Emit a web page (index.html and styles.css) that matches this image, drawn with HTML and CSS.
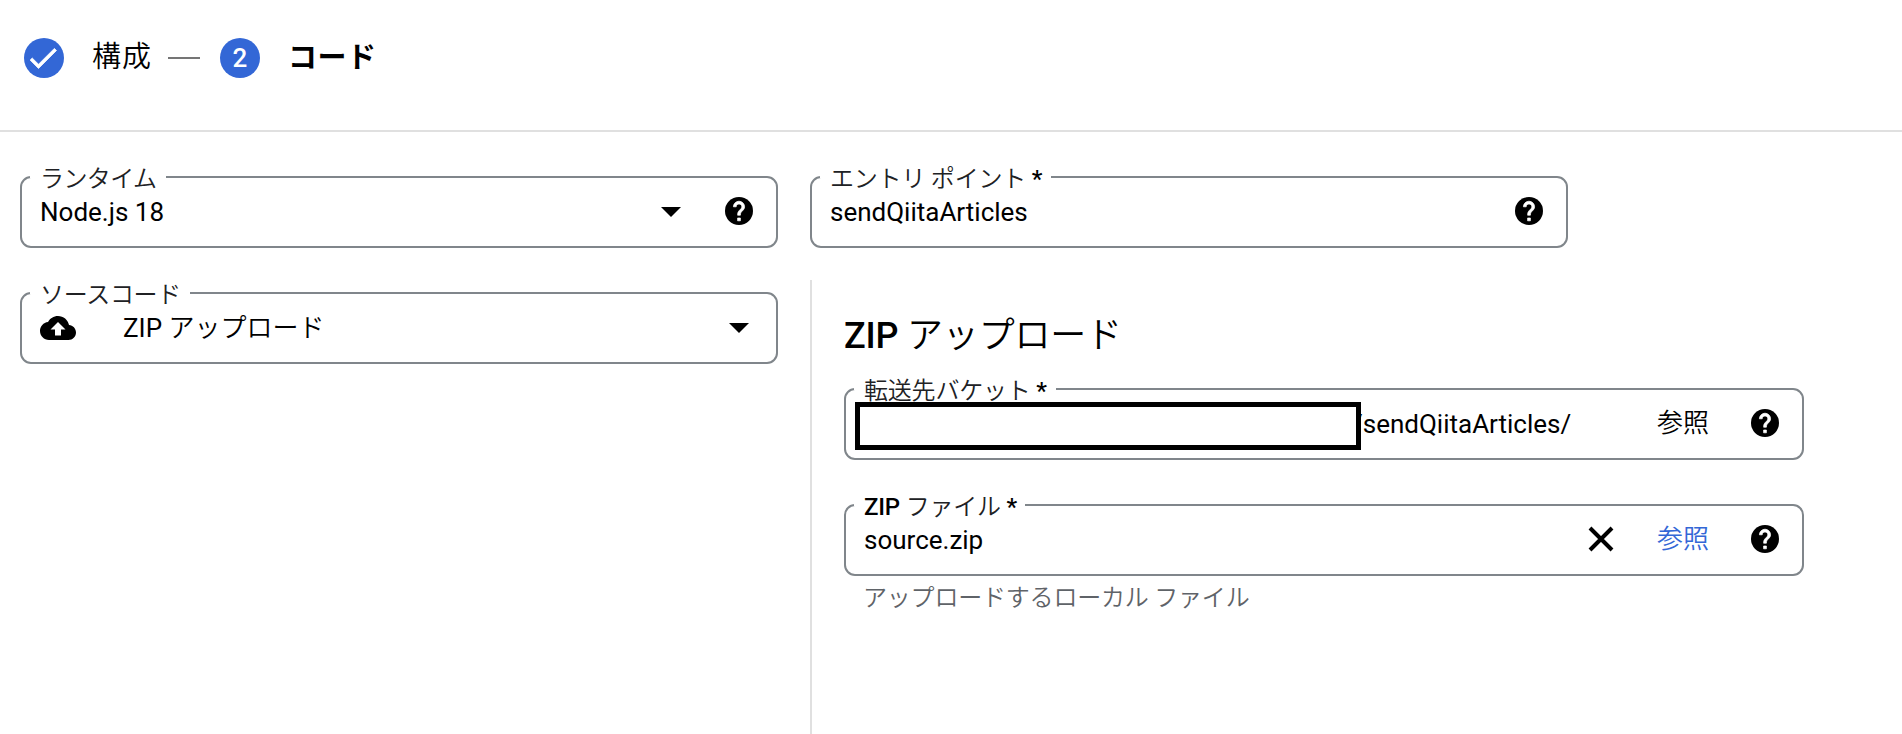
FILE: index.html
```html
<!DOCTYPE html>
<html lang="ja">
<head>
<meta charset="utf-8">
<title>コード</title>
<link rel="stylesheet" href="styles.css">
</head>
<body>
<svg class="sprite" width="0" height="0">
  <symbol id="help" viewBox="2 2 20 20"><circle cx="12" cy="12" r="10"/><path d="M13 19h-2v-2h2v2zm2.07-7.75l-.9.92C13.45 12.9 13 13.5 13 15h-2v-.5c0-1.1.45-2.1 1.17-2.83l1.24-1.26c.37-.36.59-.86.59-1.41 0-1.1-.9-2-2-2s-2 .9-2 2H8c0-2.21 1.79-4 4-4s4 1.79 4 4c0 .88-.36 1.68-.93 2.25z" fill="#fff" stroke="#fff" stroke-width="0.5"/></symbol>
  <symbol id="arrow" viewBox="0 0 20 10"><path d="M0 0h20L10 10z"/></symbol>
</svg>
<header class="stepper">
  <span class="badge"><svg class="check" width="36" height="36" viewBox="0 0 24 24"><path fill="#fff" stroke="#fff" stroke-width="0.5" d="M9 16.17L4.83 12l-1.42 1.41L9 19 21 7l-1.41-1.41z"/></svg></span>
  <span class="step">構成</span>
  <span class="dash"></span>
  <span class="badge">2</span>
  <span class="step current">コード</span>
</header>
<main class="main">
  <div class="row">
    <fieldset class="field half">
      <legend class="legend w-runtime"><span class="label l-runtime">ランタイム</span></legend>
      <div class="body">
        <span class="value">Node.js 18</span>
        <svg class="arrow"><use href="#arrow"/></svg>
        <svg class="help"><use href="#help"/></svg>
      </div>
    </fieldset>
    <fieldset class="field half">
      <legend class="legend w-entry"><span class="label l-entry">エントリ ポイント <b>*</b></span></legend>
      <div class="body">
        <span class="value">sendQiitaArticles</span>
        <svg class="help"><use href="#help"/></svg>
      </div>
    </fieldset>
  </div>
  <div class="columns">
    <div class="source">
      <fieldset class="field half">
        <legend class="legend w-source"><span class="label l-source">ソースコード</span></legend>
        <div class="body">
          <svg class="cloud" viewBox="0 4 24 16"><path d="M19.35 10.04C18.67 6.59 15.64 4 12 4 9.11 4 6.6 5.64 5.35 8.04 2.34 8.36 0 10.91 0 14c0 3.31 2.69 6 6 6h13c2.76 0 5-2.24 5-5 0-2.64-2.05-4.78-4.65-4.96zM14 13v4h-4v-4H7l5-5 5 5h-3z"/></svg>
          <span class="value">ZIP <span class="jp">アップロード</span></span>
          <svg class="arrow last"><use href="#arrow"/></svg>
        </div>
      </fieldset>
    </div>
    <section class="upload">
      <h2 class="title">ZIP <span class="jp">アップロード</span></h2>
      <fieldset class="field">
        <legend class="legend w-bucket"><span class="label l-bucket">転送先バケット <b>*</b></span></legend>
        <div class="body">
          <span class="mask"></span>
          <span class="value path">/sendQiitaArticles/</span>
          <span class="browse">参照</span>
          <svg class="help"><use href="#help"/></svg>
        </div>
      </fieldset>
      <fieldset class="field">
        <legend class="legend w-zip"><span class="label l-zip"><b>ZIP</b> ファイル <b>*</b></span></legend>
        <div class="body">
          <span class="value">source.zip</span>
          <svg class="close" viewBox="0 0 26 26"><path d="M2 2l22 22M24 2L2 24" fill="none" stroke="#000" stroke-width="4"/></svg>
          <span class="browse link">参照</span>
          <svg class="help"><use href="#help"/></svg>
        </div>
      </fieldset>
      <p class="hint">アップロードするローカル ファイル</p>
    </section>
  </div>
</main>
</body>
</html>
```
FILE: styles.css
```css
* { box-sizing: border-box; }
body {
  margin: 0;
  height: 734px;
  overflow: hidden;
  background: #fff;
  color: #000;
  font-family: Roboto, "Noto Sans CJK JP", sans-serif;
  font-size: 26px;
  display: flex;
  flex-direction: column;
}
svg { display: block; flex: none; }
.sprite { position: absolute; }

.stepper {
  height: 132px;
  flex: none;
  border-bottom: 2px solid #e0e0e0;
  padding: 38px 24px 0;
  display: flex;
  align-items: flex-start;
}
.badge {
  width: 40px;
  height: 40px;
  border-radius: 50%;
  background: #3367d6;
  color: #fff;
  font-weight: 500;
  line-height: 40px;
  display: flex;
  align-items: center;
  justify-content: center;
}
.check { margin-right: 2px; }
.step {
  width: 76px;
  margin-left: 28px;
  font-size: 29px;
  line-height: 38px;
  font-weight: 350;
  letter-spacing: 1px;
  white-space: nowrap;
}
.current { font-size: 29px; line-height: 40px; font-weight: 700; letter-spacing: 0.5px; }
.dash { width: 32px; height: 2px; margin: 19px 20px 0 0; background: #757575; }

.main { flex: 1; display: flex; flex-direction: column; padding: 44px 20px 0; }
.row { display: flex; gap: 32px; }
.field {
  height: 72px;
  margin: 0;
  min-width: 0;
  border: 2px solid #80868b;
  border-radius: 11px;
  padding: 0 8px;
}
.half { width: 758px; }
.legend {
  height: 2px;
  padding: 0 0 0 10px;
  line-height: 6px;
  font-size: 24px;
  font-weight: 350;
  white-space: nowrap;
  color: #202124;
}
.legend b { font-weight: 500; color: #000; }
.label { display: block; }
.w-runtime { width: 136px; }
.w-entry { width: 231px; }
.w-source { width: 160px; }
.w-bucket { width: 202px; }
.w-zip { width: 171px; }
.l-runtime { letter-spacing: -0.6px; }
.l-entry { letter-spacing: -0.2px; }
.l-source { letter-spacing: -0.3px; }
.l-bucket { letter-spacing: -0.2px; }
.l-zip { letter-spacing: -0.2px; }

.body { height: 68px; display: flex; align-items: center; padding: 0 15px 0 10px; }
.value { flex: 1; line-height: 36px; white-space: nowrap; }
.jp { font-weight: 350; }
.arrow { width: 20px; height: 10px; margin-right: 44px; }
.arrow.last { margin-right: 4px; }
.help { width: 28px; height: 28px; margin-bottom: 2px; }
.cloud { width: 36px; height: 24px; margin-right: 47px; }

.columns { flex: 1; display: flex; margin-top: 32px; }
.source { width: 790px; padding-top: 12px; }
.upload { width: 994px; border-left: 2px solid #e0e0e0; padding: 31px 0 0 32px; }
.title { margin: 0 0 27px; font-size: 36px; font-weight: 500; line-height: 50px; white-space: nowrap; letter-spacing: -0.2px; }
.upload .field + .field { margin-top: 44px; }
.mask { width: 506px; height: 48px; margin: 4px 0 0 -9px; flex: none; border: 5px solid #000; background: #fff; z-index: 1; }
.path { margin-left: -9px; }
.browse { margin: 0 42px 2px 0; line-height: 36px; font-weight: 350; }
.link { color: #3367d6; }
.close { width: 26px; height: 26px; margin: 0 43px 2px 0; }
.hint { margin: 4px 0 0 19px; font-size: 24px; font-weight: 350; line-height: 36px; color: #5f6368; white-space: nowrap; letter-spacing: -0.2px; }
```
